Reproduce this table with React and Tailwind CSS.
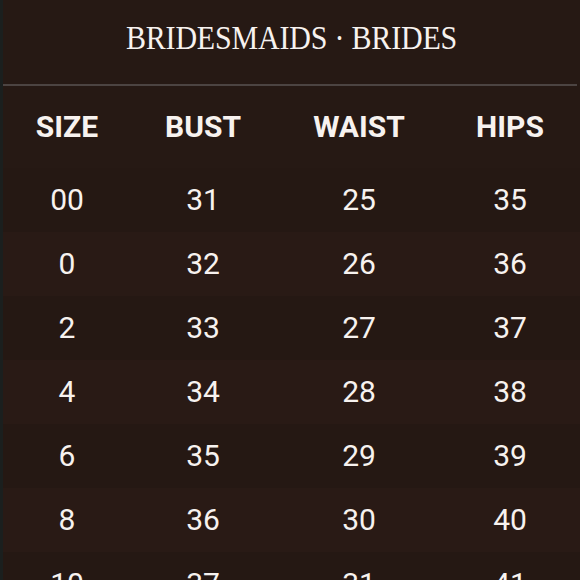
const rows = [
  ['00', '31', '25', '35'],
  ['0', '32', '26', '36'],
  ['2', '33', '27', '37'],
  ['4', '34', '28', '38'],
  ['6', '35', '29', '39'],
  ['8', '36', '30', '40'],
  ['10', '37', '31', '41'],
];

const cols = 'grid grid-cols-[128px_144px_168px_134px]';

export default function App() {
  return (
    <div className="w-[580px] h-[580px] overflow-hidden bg-[#1b1f1e] pl-[3px]">
      <div className="h-full bg-[#261914] text-[#f7f2ef]">
        <div className="h-[84px] flex items-center justify-center pb-[8px]">
          <h1 className="font-['Liberation_Serif',serif] text-[30px] leading-none scale-y-[1.12] -tracking-[0.2px]">
            BRIDESMAIDS · BRIDES
          </h1>
        </div>
        <div className="h-[2px] bg-[#4c4442] mr-[3px]" />
        <div className={`${cols} h-[82px] items-center font-['Roboto',sans-serif] font-bold text-[30px] leading-none`}>
          <div className="text-center">SIZE</div>
          <div className="text-center">BUST</div>
          <div className="text-center">WAIST</div>
          <div className="text-center">HIPS</div>
        </div>
        {rows.map((r, i) => (
          <div
            key={r[0]}
            className={`${cols} h-[64px] items-center font-['Roboto',sans-serif] text-[30px] leading-none ${
              i % 2 === 0 ? 'bg-[#251813]' : 'bg-[#291a15]'
            }`}
          >
            {r.map((v, j) => (
              <div key={j} className="text-center">{v}</div>
            ))}
          </div>
        ))}
      </div>
    </div>
  );
}
